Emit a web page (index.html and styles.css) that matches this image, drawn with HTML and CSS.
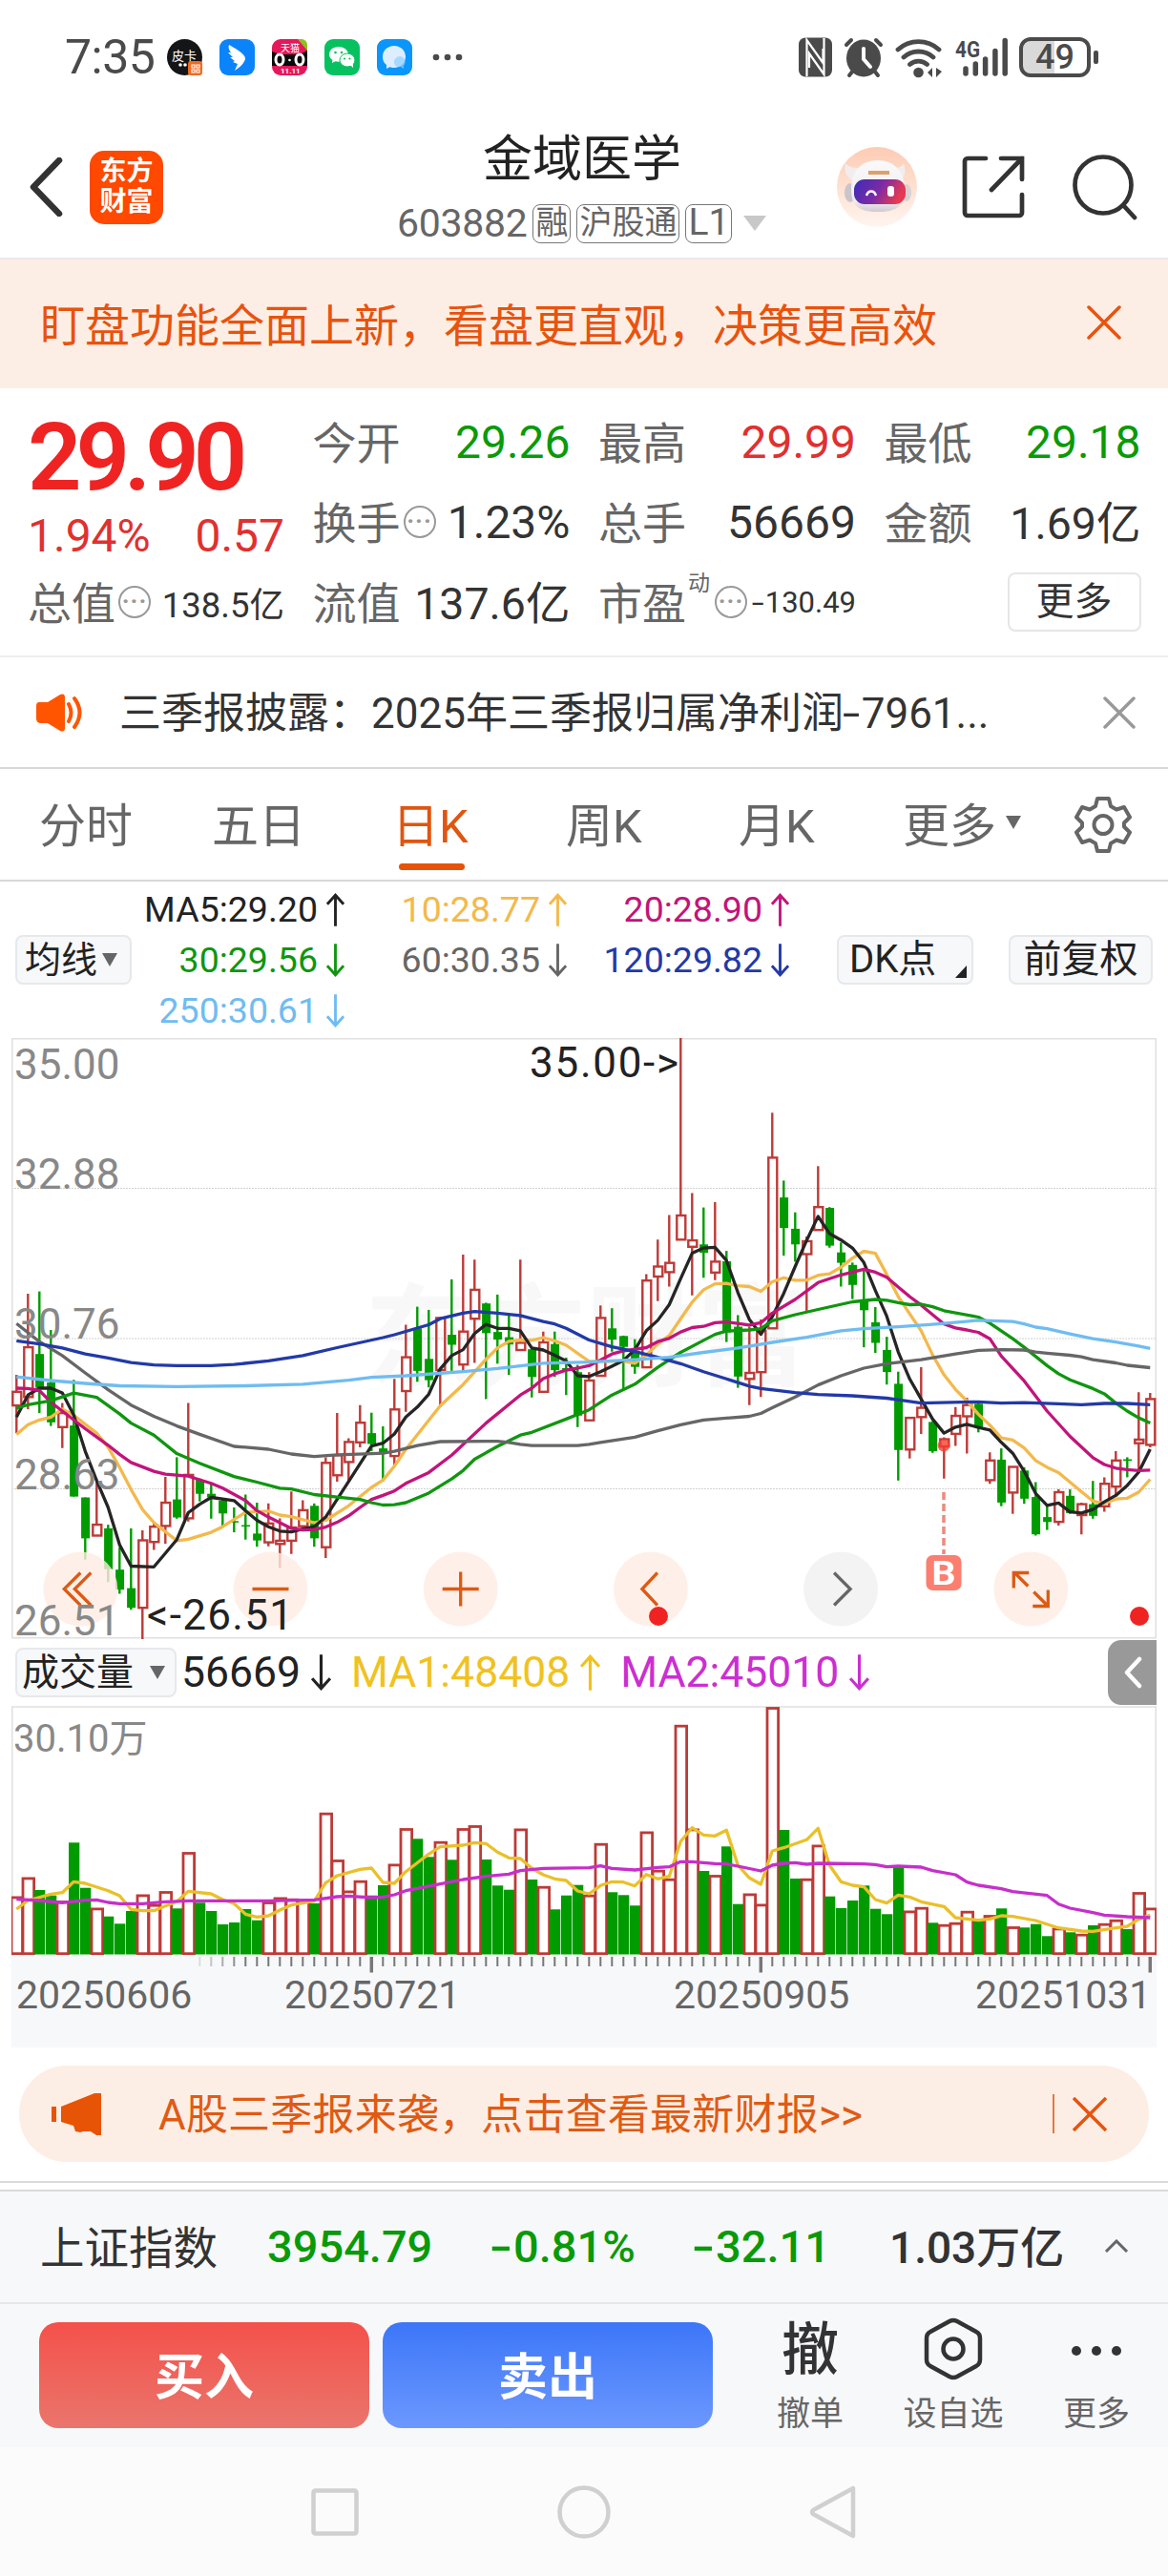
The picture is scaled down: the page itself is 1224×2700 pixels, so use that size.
FILE: index.html
```html
<!DOCTYPE html>
<html lang="zh-CN">
<head>
  <meta charset="UTF-8" />
  <meta name="viewport" content="width=device-width, initial-scale=1.0" />
  <title>金域医学 603882</title>
  <link rel="stylesheet" href="styles.css">
</head>
<body>
  <div class="phone">
    <!-- System status bar -->
    <div class="status-bar">
      <span class="clock">7:35</span>
      <div class="app-icons">
        <svg width="37" height="38" viewBox="0 0 37 38">
          <ellipse cx="18.5" cy="19" rx="18.5" ry="19" fill="#141516"/>
          <text x="5" y="22" font-size="13" fill="#fff">皮卡</text>
          <circle cx="14" cy="27" r="1.8" fill="#fff"/><circle cx="19" cy="27" r="1.8" fill="#fff"/>
          <rect x="22" y="23" width="15" height="15" rx="3" fill="#f26a21"/>
          <path d="M26 27h3v3h-3zM31 27h3v3h-3zM26 32h3v3h-3zM31 32h3v3h-3z" fill="none" stroke="#fff" stroke-width="1.2"/>
        </svg>
        <svg width="37" height="38" viewBox="0 0 37 38">
          <rect width="37" height="38" rx="9" fill="#0b84fb"/>
          <path d="M10 6c7 4 16 9 17 14 0 4-5 9-11 13l3-7-5-2 2-1-5-4 3 0-5-5 3 0c-2-3-3-5-2-8z" fill="#fff"/>
        </svg>
        <svg width="37" height="38" viewBox="0 0 37 38">
          <rect width="37" height="38" rx="9" fill="#e6175a"/>
          <path d="M27 0h4a6 6 0 0 1 6 6v6z" fill="#8cc21b"/>
          <path d="M0 13l8 3h21l8-4v16H0z" fill="#0a0a0a"/>
          <text x="9" y="13" font-size="10" fill="#fff">天猫</text>
          <ellipse cx="8" cy="21.500" rx="4" ry="5.500" fill="none" stroke="#fff" stroke-width="3"/>
          <ellipse cx="29" cy="21.500" rx="4" ry="5.500" fill="none" stroke="#fff" stroke-width="3"/>
          <circle cx="18.500" cy="22" r="1.300" fill="#fff"/>
          <text x="9" y="36" font-size="8" font-weight="700" fill="#fff">11.11</text>
        </svg>
        <svg width="37" height="38" viewBox="0 0 37 38">
          <rect width="37" height="38" rx="9" fill="#07c160"/>
          <path d="M15 8c-6 0-10 3.600-10 8 0 2.500 1.300 4.500 3.500 6l-.6 3 3.600-1.700c1 .3 2.300.4 3.500.4C21 23.700 25 20 25 16s-4-8-10-8z" fill="#fff"/>
          <ellipse cx="24" cy="22" rx="8" ry="7" fill="#fff" stroke="#07c160" stroke-width="1"/>
          <path d="M27 27l3 3 0-4z" fill="#fff"/>
          <g fill="#07c160"><circle cx="11.500" cy="14" r="1.300"/><circle cx="18" cy="14" r="1.300"/><circle cx="21" cy="20.500" r="1.100"/><circle cx="26.500" cy="20.500" r="1.100"/></g>
        </svg>
        <svg width="37" height="38" viewBox="0 0 37 38">
          <rect width="37" height="38" rx="9" fill="#0a96fb"/>
          <path d="M18 7c7 0 12 5 12 11.500S25 30 18 30c-2 0-3-.3-4.500-.8L10 31v-4c-3-2-4-5-4-8.500C6 12 11 7 18 7z" fill="#dceeff"/>
          <path d="M24 18a6 6 0 0 1 4 10v3l-3-2c-5 1-7-2-7-5s3-6 6-6z" fill="#8fd0ff" opacity=".7"/>
        </svg>
        <svg class="ellipsis" width="32" height="8" viewBox="0 0 32 8"><circle cx="4" cy="4" r="3.300"/><circle cx="16" cy="4" r="3.300"/><circle cx="28" cy="4" r="3.300"/></svg>
      </div>
      <div class="system-icons">
        <svg width="35" height="42" viewBox="0 0 35 42">
          <rect width="35" height="41" y=".5" rx="7" fill="#4a4a4a"/>
          <path d="M8.500 41V3l17 24V12M26.500 1v38L11 17v15" fill="none" stroke="#fff" stroke-width="2.200"/>
        </svg>
        <svg class="alarm" width="42" height="44" viewBox="0 0 42 44">
          <g stroke="#4a4a4a" stroke-width="4" stroke-linecap="round"><path d="M3 9l5-5M39 9l-5-5M10 36l-4 5M32 36l4 5"/></g>
          <ellipse cx="21" cy="23" rx="18" ry="19.500" fill="#4a4a4a"/>
          <path d="M21 13v11l7 8" fill="none" stroke="#fff" stroke-width="4" stroke-linecap="round"/>
        </svg>
        <svg class="wifi" width="50" height="44" viewBox="0 0 50 44">
          <g fill="none" stroke="#4a4a4a" stroke-width="4.800" stroke-linecap="round">
            <path d="M3 14a32 32 0 0 1 43 0M9 22a23 23 0 0 1 31 0M15.500 29.500a13.500 13.500 0 0 1 18 0"/>
          </g>
          <circle cx="24.500" cy="38" r="5.300" fill="#4a4a4a"/>
          <path d="M39 33v10l-5-5zM43 33v10l6-6z" fill="#4a4a4a"/>
        </svg>
        <svg class="signal" width="58" height="44" viewBox="0 0 58 44">
          <text x="1" y="22" font-size="24" font-weight="700" textLength="26" lengthAdjust="spacingAndGlyphs" fill="#4a4a4a">4G</text>
          <g stroke="#4a4a4a" stroke-width="5.500" stroke-linecap="round"><path d="M12 34v5M22.300 29v10M32.600 24v15M42.900 15.500v23.500M53.200 4.500v34.500"/></g>
        </svg>
        <div class="battery"><span>49</span></div>
        <i class="battery-nub"></i>
      </div>
    </div>

    <!-- Title bar -->
    <header class="header">
      <svg class="back" width="36" height="62" viewBox="0 0 36 62"><path d="M32 3L5 31l27 28" fill="none" stroke="#333" stroke-width="6.500" stroke-linejoin="round" stroke-linecap="round"/></svg>
      <div class="logo">东方<br>财富</div>
      <div class="title">
        <h1>金域医学</h1>
        <div class="code">
          <span>603882</span>
          <b>融</b><b>沪股通</b><b>L1</b>
          <i class="tri"></i>
        </div>
      </div>
      <svg class="robot" width="84" height="84" viewBox="0 0 84 84">
        <defs>
          <linearGradient id="halo" x1="0" y1="0" x2="0" y2="1"><stop offset="0" stop-color="#fdcbb4"/><stop offset="1" stop-color="#fff5ef"/></linearGradient>
          <linearGradient id="visor" x1="0" y1="0" x2="1" y2=".3"><stop offset="0" stop-color="#3b2db6"/><stop offset=".55" stop-color="#7b2aa6"/><stop offset="1" stop-color="#e63a52"/></linearGradient>
          <linearGradient id="shell" x1="0" y1="0" x2="0" y2="1"><stop offset="0" stop-color="#fbf9fa"/><stop offset=".8" stop-color="#efecef"/><stop offset="1" stop-color="#cfcad2"/></linearGradient>
        </defs>
        <circle cx="42" cy="42" r="42" fill="url(#halo)"/>
        <path d="M9 17c-2 10 2 16 8 18l6-13c-6 0-11-1-14-5zM70 17c3 10 1 15-4 18l-6-13c5 0 8-1 10-5z" fill="#f1eded"/>
        <ellipse cx="14" cy="48" rx="6" ry="10" fill="#c9c5cc"/><ellipse cx="73" cy="48" rx="5" ry="9" fill="#d8d2d4"/>
        <path d="M43 14c17 0 28 12 28 30 0 17-7 24-28 24S15 61 15 44c0-18 10-30 28-30z" fill="url(#shell)"/>
        <rect x="18" y="34" width="54" height="26" rx="11" fill="url(#visor)"/>
        <path d="M33 27h22" stroke="#dca06a" stroke-width="4"/>
        <path d="M31 51c2-6 8-6 10 0" fill="none" stroke="#fff" stroke-width="2.500"/>
        <rect x="53" y="41" width="7" height="11" rx="3" fill="#fff"/>
      </svg>
      <svg class="share" width="66" height="66" viewBox="0 0 66 66"><path d="M25 3H6a3 3 0 0 0-3 3v54a3 3 0 0 0 3 3h54a3 3 0 0 0 3-3V41M41 3h22v22M63 3L31 36" fill="none" stroke="#333" stroke-width="4.700" stroke-linecap="round"/></svg>
      <svg class="search" width="70" height="70" viewBox="0 0 70 70"><g fill="none" stroke="#333" stroke-width="4.700" stroke-linecap="round"><circle cx="33" cy="33" r="29.500"/><path d="M54 54l12 13"/></g></svg>
    </header>

    <div class="banner">
      <span>盯盘功能全面上新，看盘更直观，决策更高效</span>
      <svg width="36" height="36" viewBox="0 0 36 36"><path d="M2 2l32 32M34 2L2 34" stroke="#e8530e" stroke-width="3.500" stroke-linecap="round"/></svg>
    </div>

    <!-- Quote summary -->
    <section class="quote">
      <div class="price-cell">
        <div class="price">29.90</div>
        <div class="change"><span>1.94%</span><span>0.57</span></div>
      </div>
      <div class="cell"><label>今开</label><span class="green">29.26</span></div>
      <div class="cell"><label>最高</label><span class="red">29.99</span></div>
      <div class="cell"><label>最低</label><span class="green">29.18</span></div>
      <div class="cell"><label>换手</label><i class="dots">···</i><span>1.23%</span></div>
      <div class="cell"><label>总手</label><span>56669</span></div>
      <div class="cell"><label>金额</label><span class="yi">1.69亿</span></div>
      <div class="cell"><label>总值</label><i class="dots">···</i><span class="mid">138.5亿</span></div>
      <div class="cell"><label>流值</label><span class="yi">137.6亿</span></div>
      <div class="cell"><label>市盈</label><sup>动</sup><i class="dots">···</i><span class="small"><em>-</em>130.49</span></div>
      <div class="cell"><button class="more">更多</button></div>
    </section>

    <div class="notice">
      <svg width="50" height="42" viewBox="0 0 50 42"><path d="M3 10h9L25 2q5-2 5 3v32q0 5-5 3l-13-8H5q-5 0-5-5V14q0-4 3-4z" fill="#ff5500"/><path d="M34 12q5 9 0 18M40 6q11 15 0 30" fill="none" stroke="#ff5500" stroke-width="4" stroke-linecap="round"/></svg>
      <span>三季报披露：2025年三季报归属净利润<em>-</em>7961...</span>
      <svg width="34" height="34" viewBox="0 0 34 34"><path d="M2 2l30 30M32 2L2 32" stroke="#999" stroke-width="3.500" stroke-linecap="round"/></svg>
    </div>

    <nav class="tabs">
      <a>分时</a><a>五日</a><a class="active">日K</a><a>周K</a><a>月K</a><a>更多<i class="tri dark"></i></a>
      <svg width="60" height="60" viewBox="0 0 60 60"><path d="M24 3h12l2 8 6 3.500 8-2.500 6 10.500-6 6v4l6 6-6 10.500-8-2.500-6 3.500-2 8H24l-2-8-6-3.500-8 2.500L2 38.500l6-6v-4l-6-6L8 12l8 2.500 6-3.500z" fill="none" stroke="#666" stroke-width="4" stroke-linejoin="round"/><circle cx="30" cy="30.500" r="9.500" fill="none" stroke="#666" stroke-width="4"/></svg>
    </nav>

    <!-- Moving average legend -->
    <section class="legend">
      <button class="tag avg">均线<i class="tri dark"></i></button>
      <div class="ma-grid">
        <span class="ma5">MA5:29.20<svg class="arw"><use href="#up"/></svg></span>
        <span class="ma10">10:28.77<svg class="arw"><use href="#up"/></svg></span>
        <span class="ma20">20:28.90<svg class="arw"><use href="#up"/></svg></span>
        <span class="ma30">30:29.56<svg class="arw"><use href="#down"/></svg></span>
        <span class="ma60">60:30.35<svg class="arw"><use href="#down"/></svg></span>
        <span class="ma120">120:29.82<svg class="arw"><use href="#down"/></svg></span>
        <span class="ma250">250:30.61<svg class="arw"><use href="#down"/></svg></span>
      </div>
      <button class="tag dk">DK点<i class="corner"></i></button>
      <button class="tag fq">前复权</button>
    </section>

    <svg class="chart" id="kline" width="1200" height="630" viewBox="0 0 1200 630"></svg>

    <section class="vol-head">
      <button class="tag vol">成交量<i class="tri dark"></i></button>
      <span class="v0">56669<svg class="arw"><use href="#down"/></svg></span>
      <span class="v1">MA1:48408<svg class="arw"><use href="#up"/></svg></span>
      <span class="v2">MA2:45010<svg class="arw"><use href="#down"/></svg></span>
      <div class="fold"><svg width="20" height="34" viewBox="0 0 20 34"><path d="M17 3L4 17l13 14" fill="none" stroke="#fff" stroke-width="4.500" stroke-linecap="round" stroke-linejoin="round"/></svg></div>
    </section>

    <svg class="chart" id="volume" width="1200" height="262" viewBox="0 0 1200 262"></svg>

    <div class="axis">
      <svg id="ticks" width="1200" height="20" viewBox="0 0 1200 20"></svg>
      <div class="dates"><span>20250606</span><span>20250721</span><span>20250905</span><span>20251031</span></div>
    </div>

    <div class="pill">
      <svg width="52" height="44" viewBox="0 0 52 44"><path d="M0 14h5v16H0zM10 14L45 0h7v44h-5l-6-4h-8l-3 1-5-1-2-6-13-4z" fill="#e85405"/></svg>
      <span>A股三季报来袭，点击查看最新财报&gt;&gt;</span>
      <i class="bar"></i>
      <svg width="36" height="36" viewBox="0 0 36 36"><path d="M1 1l34 34M35 1L1 35" stroke="#e8530e" stroke-width="3.500"/></svg>
    </div>

    <footer class="bottom">
      <div class="index-row">
        <span class="name">上证指数</span>
        <span class="green">3954.79</span>
        <span class="green"><em>-</em>0.81%</span>
        <span class="green"><em>-</em>32.11</span>
        <span class="amount">1.03万亿</span>
        <svg width="26" height="15" viewBox="0 0 26 15"><path d="M2 13L13 2l11 11" fill="none" stroke="#666" stroke-width="3"/></svg>
      </div>
      <div class="actions">
        <button class="buy">买入</button>
        <button class="sell">卖出</button>
        <div class="act"><b>撤</b><span>撤单</span></div>
        <div class="act"><svg width="62" height="66" viewBox="0 0 62 66"><path d="M27 4q4-2 8 0l20 11q4 2 4 7v22q0 5-4 7L35 62q-4 2-8 0L7 51q-4-2-4-7V22q0-5 4-7z" fill="none" stroke="#333" stroke-width="4.500"/><circle cx="31" cy="33" r="10.500" fill="none" stroke="#333" stroke-width="4.500"/></svg><span>设自选</span></div>
        <div class="act"><svg width="54" height="66" viewBox="0 0 54 66" fill="#333"><circle cx="6" cy="35" r="5"/><circle cx="27" cy="35" r="5"/><circle cx="48" cy="35" r="5"/></svg><span>更多</span></div>
      </div>
    </footer>

    <div class="nav-bar">
      <svg width="50" height="50" viewBox="0 0 50 50"><rect x="2.500" y="2.500" width="45" height="45" rx="2" fill="none" stroke="#d0d0d0" stroke-width="4.500"/></svg>
      <svg width="56" height="56" viewBox="0 0 56 56"><circle cx="28" cy="28" r="25.500" fill="none" stroke="#d0d0d0" stroke-width="4.500"/></svg>
      <svg width="50" height="56" viewBox="0 0 50 56"><path d="M46 3v50L4 30q-2-2 0-4z" fill="none" stroke="#d0d0d0" stroke-width="4.500" stroke-linejoin="round"/></svg>
    </div>
  </div>

  <svg class="defs">
    <symbol id="up" viewBox="0 0 22 36"><path d="M11 36V2M2 12l9-10 9 10" fill="none" stroke="currentColor" stroke-width="3"/></symbol>
    <symbol id="down" viewBox="0 0 22 36"><path d="M11 0v34M2 24l9 10 9-10" fill="none" stroke="currentColor" stroke-width="3"/></symbol>
  </svg>
  <script src="chart.js"></script>
</body>
</html>
```
FILE: chart.js
```js
(function() {
  // Candles: colour, high, open/close top, open/close bottom, low (chart levels, 21 = top edge)
  const candles = `r860,902,936,1005 r658,791,915,945 g652,808,892,955 g748,879,978,987 r930,955,990,1042
    g872,986,1163,1163 g1165,1165,1267,1320 r1120,1233,1260,1260 g1233,1242,1344,1376 g1290,1345,1395,1405
    g1242,1391,1440,1445 r1247,1272,1440,1518 r1230,1238,1276,1296 r1114,1178,1236,1280 g1065,1170,1215,1218
    r930,1109,1217,1225 g1118,1121,1156,1175 g1130,1156,1165,1218 g1170,1173,1205,1238 g1190,1224,1227,1252
    g1158,1234,1237,1270 g1178,1255,1272,1288 r1180,1230,1277,1287 r1217,1273,1281,1341 r1150,1240,1273,1306
    r1172,1197,1237,1242 g1180,1186,1267,1288 r1065,1079,1289,1316 r955,1060,1110,1126 r1018,1027,1077,1125
    r935,979,1028,1040 g954,1005,1032,1050 g988,1043,1056,1125 r870,946,1062,1085 r735,816,900,952
    g690,744,850,877 g698,820,873,891 r718,718,848,940 g622,760,785,850 r560,752,834,848
    r573,648,720,830 g680,682,756,920 g660,753,772,832 g710,766,784,860 r573,780,798,800
    g793,796,865,916 r752,779,902,902 g752,783,848,865 g817,843,850,910 g835,853,961,990
    r853,874,973,973 r687,718,862,862 g694,744,772,802 g762,763,790,897 g771,800,840,857
    r609,625,841,841 r523,590,615,676 r462,581,604,640 r21,463,523,523 r407,525,541,662
    g443,535,556,618 r430,578,605,624 g551,577,754,778 g711,740,864,892 r740,855,870,935
    r722,750,853,915 r207,319,744,744 g376,418,494,563 g455,496,535,578 r515,527,559,702
    r340,442,499,499 g442,444,538,543 g530,555,581,640 g580,586,636,671 g600,674,699,791
    g691,729,780,805 g765,798,853,884 g852,882,1047,1123 r967,967,1046,1068 r841,942,965,1007
    g975,977,1050,1054 r1015,1020,1038,1118 r940,962,1007,1037 r917,935,963,1056 g930,932,990,1003
    r1053,1073,1122,1131 g1043,1071,1178,1187 r1089,1089,1153,1206 g1090,1098,1168,1181 g1127,1164,1257,1260
    g1185,1214,1226,1246 r1145,1152,1226,1235 g1145,1161,1204,1206 r1178,1182,1209,1257 g1124,1182,1211,1218
    r1115,1131,1187,1201 r1050,1073,1138,1163 g1065,1070,1074,1115 r903,1021,1030,1100 r905,920,1034,1040`
    .split(/\s+/).map(s => [s[0], ...s.slice(1).split(',').map(Number)]);

  // Lines: index:level
  const averages = [
    ['#f3b94c', '0:1008 1:984 2:972 3:965 4:945 5:960 6:983 7:1005 8:1040 9:1090 10:1145 11:1195 12:1228 14:1273 15:1269 17:1252 18:1238 20:1202 22:1199 23:1209 24:1213 26:1228 27:1222 29:1186 31:1140 32:1122 33:1087 34:1045 37:937 39:884 41:821 42:793 43:776 44:773 45:774 46:767 47:775 48:786 50:826 51:826 53:826 54:831 55:810 56:783 57:762 58:720 59:679 60:648 61:633 62:632 63:638 64:640 65:652 66:628 67:618 68:624 69:624 70:612 71:608 72:592 73:569 74:552 75:557 76:610 77:665 78:708 79:750 80:810 81:860 82:896 83:925 84:958 85:985 86:1017 87:1022 88:1042 89:1073 90:1090 91:1103 92:1127 93:1151 94:1174 95:1180 96:1169 97:1167 98:1152 99:1120'],
    ['#252525', '0:965 1:910 2:893 3:893 4:905 5:960 6:1050 7:1123 8:1190 9:1283 10:1336 12:1338 14:1270 15:1203 16:1182 17:1165 19:1173 20:1198 21:1222 22:1238 23:1249 24:1251 25:1244 26:1238 27:1214 31:1037 32:1030 33:1007 34:965 35:940 36:908 37:845 38:812 39:797 40:757 41:734 42:744 43:744 44:750 45:793 46:798 47:811 48:825 49:862 50:864 51:852 52:838 53:824 54:797 55:750 56:724 57:685 58:620 59:557 60:544 61:542 62:575 63:655 64:722 65:759 66:715 67:657 68:590 69:525 70:465 71:508 72:524 73:544 74:580 75:650 76:714 77:803 78:870 79:920 80:970 81:1005 82:990 83:983 84:991 85:997 86:1028 87:1055 88:1100 89:1155 90:1185 91:1179 92:1201 93:1204 94:1195 95:1176 96:1160 97:1135 98:1102 99:1045'],
    ['#c2147a', '0:893 1:894 2:899 3:928 6:994 8:1035 9:1058 10:1078 12:1100 13:1107 15:1112 17:1130 18:1142 20:1173 21:1198 22:1214 24:1242 25:1246 26:1245 27:1239 28:1227 29:1211 30:1190 31:1170 32:1160 33:1149 34:1130 36:1103 38:1060 41:980 44:910 45:893 46:869 47:857 48:848 49:843 50:837 51:823 52:808 53:800 55:792 56:777 57:769 58:753 59:742 60:739 61:730 62:728 64:736 65:730 66:706 68:672 70:630 72:611 74:597 75:604 76:617 77:641 78:665 79:686 80:710 81:733 82:743 83:748 84:754 85:770 86:813 88:875 90:950 92:1013 94:1066 95:1083 96:1092 97:1096 98:1098 99:1097'],
    ['#0f960f', '0:943 1:934 3:924 5:905 7:916 9:957 10:980 12:1010 14:1056 16:1080 19:1113 21:1127 23:1142 24:1144 26:1158 28:1164 30:1170 31:1178 32:1184 33:1183 34:1178 36:1154 38:1119 39:1098 40:1070 42:1038 44:1010 45:1003 48:970 50:947 52:910 54:883 56:841 58:804 60:774 61:759 62:751 64:748 65:745 66:725 68:710 70:697 73:678 75:672 76:674 77:680 78:685 79:684 80:690 81:700 84:716 85:731 87:770 88:791 90:837 91:857 92:872 94:894 95:907 96:930 97:950 98:967 99:980'],
    ['#666666', '0:732 2:777 4:812 6:855 8:897 10:935 12:963 14:987 16:1008 19:1038 20:1040 22:1045 24:1057 26:1063 28:1059 31:1056 32:1055 33:1050 35:1036 37:1026 42:1025 43:1028 44:1033 45:1036 49:1036 50:1033 51:1028 54:1015 56:999 58:984 60:972 64:963 65:956 66:942 68:915 70:885 72:862 74:843 76:832 79:822 82:808 84:799 86:797 88:798 89:803 90:806 92:811 93:815 94:822 96:830 97:836 99:842'],
    ['#2239a8', '0:775 2:783 4:793 6:808 8:818 10:829 12:835 14:837 17:837 19:834 22:825 25:812 28:792 32:767 33:760 36:735 37:720 39:706 40:702 42:706 44:712 46:727 47:733 48:744 50:773 52:790 54:802 56:816 58:832 60:852 62:870 64:888 65:894 68:904 70:909 73:912 76:918 78:926 79:930 84:927 86:930 88:929 91:932 93:934 95:931 97:931 99:934'],
    ['#6fbcf2', '0:865 3:874 6:881 9:887 14:889 20:887 25:883 29:873 31:866 34:862 39:852 42:844 46:831 50:828 54:822 57:816 60:804 63:793 66:779 69:766 72:750 74:745 77:740 80:734 84:724 87:727 88:733 89:741 90:745 92:758 94:770 96:778 98:788 99:794']
  ];

  // Volume bar tops, three levels per pixel, 237 = top edge
  const volumes = [833,773,813,830,847,664,806,869,896,919,879,827,858,817,871,694,853,879,921,915,
    873,908,850,836,840,843,855,570,718,815,783,830,798,731,619,652,709,660,718,619,
    610,717,799,812,620,780,801,874,830,797,828,666,820,829,862,629,750,777,294,620,
    753,766,676,857,824,857,238,624,777,777,671,833,870,846,799,872,889,744,878,867,
    916,921,915,879,905,892,871,928,931,920,958,932,946,951,924,918,906,936,820,869];

  const volumeLines = [
    ['#eac02a', '0:873 1:846 3:826 4:821 5:787 6:792 8:815 9:831 10:874 11:878 12:878 13:863 14:850 15:817 17:825 18:843 19:856 20:889 21:898 22:894 23:876 24:860 26:848 27:790 28:768 30:748 31:744 32:789 33:792 34:755 36:700 37:677 39:672 40:664 41:667 42:694 43:712 44:714 45:745 46:765 47:778 48:783 49:816 50:825 51:799 52:787 53:788 54:800 55:764 56:778 57:770 58:660 59:617 60:640 61:643 62:625 63:735 64:775 65:795 66:690 67:680 69:655 70:619 71:735 72:787 73:798 74:803 75:843 76:854 77:829 78:835 79:850 81:865 82:900 84:908 85:904 86:894 87:896 89:909 91:932 93:942 94:943 96:932 97:927 98:905 99:892'],
    ['#c62fcb', '0:842 2:846 4:853 6:845 7:844 8:852 9:856 11:856 13:850 15:847 22:847 26:844 28:834 29:832 31:837 32:835 33:828 34:815 35:808 37:794 39:780 41:770 43:763 44:752 46:745 50:743 51:737 52:745 54:750 56:742 57:740 58:724 59:724 61:730 62:731 63:738 65:753 66:735 67:729 68:727 69:732 70:729 73:730 74:731 75:733 76:740 77:738 79:741 80:752 82:765 83:788 84:798 86:809 87:818 90:830 91:857 92:870 94:884 95:892 97:897 99:900']
  ];

  const RED = '#bd3a37';
  const GREEN = '#009b00';
  const x = i => 5.3 + 12 * i;
  const y = v => (v - 21) / 2.376;
  const vy = v => (v - 237) / 3 + 1;
  const f = n => n.toFixed(1);

  function line(points, color, scale) {
    const pts = points.split(' ').map(p => {
      const [i, v] = p.split(':').map(Number);
      return f(x(i)) + ',' + f(scale(v));
    }).join(' ');
    return `<polyline points="${pts}" fill="none" stroke="${color}" stroke-width="3.300" stroke-linejoin="round"/>`;
  }

  function drawKline() {
    let out = '<text x="370" y="355" class="watermark">东方财富</text>';
    [157.5, 315, 472.5].forEach(g => {
      out += `<path d="M0 ${g}H1200" stroke="#d2d2d2" stroke-dasharray="2 1"/>`;
    });
    out += '<rect x=".75" y=".75" width="1198.500" height="628" fill="none" stroke="#e0e0e0" stroke-width="1.500"/>';
    candles.forEach(([c, high, top, bottom, low], i) => {
      const color = c === 'r' ? RED : GREEN;
      const cx = f(x(i));
      if (c === 'r') {
        out += `<path d="M${cx} ${f(y(high))}V${f(y(top))}M${cx} ${f(y(bottom))}V${f(y(low))}" stroke="${color}" stroke-width="2.400"/>`;
        out += `<rect x="${f(x(i) - 4)}" y="${f(y(top))}" width="9" height="${f(y(bottom) - y(top))}" fill="none" stroke="${color}" stroke-width="2.400"/>`;
      } else {
        out += `<path d="M${cx} ${f(y(high))}V${f(y(low))}" stroke="${color}" stroke-width="2.400"/>`;
        out += `<rect x="${f(x(i) - 4.200)}" y="${f(y(top))}" width="9" height="${f(Math.max(1.500, y(bottom) - y(top)))}" fill="${color}"/>`;
      }
    });
    averages.forEach(a => { out += line(a[1], a[0], y); });

    // Buy marker
    out += '<circle cx="977" cy="427" r="6.500" fill="#f5402e" opacity=".8"/>';
    out += '<path d="M977 476V541" stroke="#ec8a7e" stroke-width="3.500" stroke-dasharray="8 4"/>';
    out += '<rect x="958.500" y="542" width="37" height="37" rx="7" fill="#fb7e70"/>';
    out += '<text x="977" y="573" class="buy-mark" textLength="25" lengthAdjust="spacingAndGlyphs">B</text>';

    // Round chart buttons
    const icons = [
      'M11-17L-6 0L11 17M0-17L-17 0L0 17', 'M-19 0H19', 'M-19 0H19M0-18V18',
      'M7-17L-9 0L7 17', 'M-7-17L10 0L-7 17', 'M-18-1V-17H-2M-17-17L-3-3M18 1V18H2M17 17L3 3'
    ];
    icons.forEach((d, i) => {
      const gray = i === 4;
      out += `<g transform="translate(${72.300 + 199.200 * i} 577.500)">
        <circle r="39" fill="${gray ? '#f0f0f0' : '#feece2'}" opacity=".8"/>
        <path d="${d}" fill="none" stroke="${gray ? '#666' : '#dc5a14'}" stroke-width="3.300"/></g>`;
    });

    // Price scale
    [['35.00', 43], ['32.88', 158], ['30.76', 315], ['28.63', 473], ['26.51', 626]].forEach(l => {
      out += `<text x="3" y="${l[1]}" class="scale">${l[0]}</text>`;
    });
    out += '<text x="543" y="41" class="mark" textLength="156">35.00-&gt;</text>';
    out += '<text x="142" y="620" class="mark" textLength="153">&lt;-26.51</text>';

    out += '<circle cx="678" cy="606" r="10" fill="#f02323"/><circle cx="1182" cy="606" r="10" fill="#f02323"/>';
    document.getElementById('kline').innerHTML = out;
  }

  function drawVolume() {
    let out = '<path d="M.75 262V1H1199.250V262" fill="none" stroke="#e0e0e0" stroke-width="1.500"/>';
    volumes.forEach((v, i) => {
      const h = 260.500 - vy(v);
      if (candles[i][0] === 'r') {
        out += `<rect x="${f(x(i) - 5.300)}" y="${f(vy(v) + 1.200)}" width="11.600" height="${f(h - 2)}" fill="#fff" stroke="${RED}" stroke-width="2.800"/>`;
      } else {
        out += `<rect x="${f(x(i) - 5.300)}" y="${f(vy(v))}" width="11.300" height="${f(h)}" fill="${GREEN}"/>`;
      }
    });
    volumeLines.forEach(l => { out += line(l[1], l[0], vy); });
    out += '<text x="2" y="48" class="vol-scale">30.10万</text>';
    document.getElementById('volume').innerHTML = out;
  }

  function drawTicks() {
    let out = '';
    for (let i = 16; i < 100; i++) {
      const major = i === 31 || i === 65 || i === 99;
      const alpha = Math.min(1, (i - 15) / 5);
      out += `<path d="M${f(x(i))} 1V${major ? 17.500 : 11}" stroke="#777" stroke-width="${major ? 3.500 : 2}" opacity="${alpha}"/>`;
    }
    document.getElementById('ticks').innerHTML = out;
  }

  drawKline();
  drawVolume();
  drawTicks();
})();
```
FILE: styles.css
```css
* {
  margin: 0;
  padding: 0;
  box-sizing: border-box;
}
body {
  font-family: Roboto, "Noto Sans CJK SC", sans-serif;
  background: #fff;
  color: #333;
}
button {
  font: inherit;
  color: inherit;
  border: none;
}
svg {
  display: block;
  flex: none;
}
i {
  font-style: normal;
}
/* Wide minus sign in front of numbers */
em {
  display: inline-block;
  font-style: normal;
  margin: 0 .1em 0 .05em;
  transform: scaleX(1.5);
}
.defs {
  display: none;
}
.phone {
  width: 1224px;
  height: 2700px;
  overflow: hidden;
  display: flex;
  flex-direction: column;
}
.phone > * {
  flex: none;
}
.green {
  color: #099a09;
}
.red {
  color: #e03030;
}
.tri {
  border: 12px solid transparent;
  border-top: 16px solid #c8c8c8;
  border-bottom: none;
}
.tri.dark {
  border-width: 14px 8px 0;
  border-top-color: #666;
}

/* Status bar */
.status-bar {
  height: 120px;
  padding: 0 73px 0 68px;
  display: flex;
  align-items: center;
  color: #4a4a4a;
}
.clock {
  font-size: 50px;
  width: 107px;
  letter-spacing: -.5px;
}
.app-icons {
  display: flex;
  align-items: center;
  gap: 18px;
}
.ellipsis {
  margin-left: 3px;
  fill: #4a4a4a;
}
.system-icons {
  display: flex;
  align-items: center;
  margin-left: auto;
}
.alarm {
  margin-left: 12px;
}
.wifi {
  margin-left: 12px;
}
.signal {
  margin: 0 10px 0 12px;
}
.battery {
  width: 75px;
  height: 42px;
  border: 4px solid #4a4a4a;
  border-radius: 12px;
  background: linear-gradient(90deg, #d9d9d9 50%, #fff 50%);
  font-size: 36px;
  font-weight: 500;
  line-height: 35px;
  text-align: center;
}
.battery-nub {
  width: 5px;
  height: 14px;
  margin-left: 3px;
  border-radius: 2px;
  background: #4a4a4a;
}

/* Header */
.header {
  height: 152px;
  padding-left: 30px;
  display: flex;
  align-items: flex-start;
  border-bottom: 2px solid #e9e9e9;
}
.back {
  margin-top: 45px;
}
.logo {
  width: 77px;
  height: 77px;
  margin: 38px 0 0 28px;
  padding-top: 6px;
  border-radius: 15px;
  background: #ff4800;
  color: #fff;
  font-size: 28px;
  font-weight: 700;
  line-height: 32px;
  text-align: center;
}
.title {
  width: 482px;
  margin-left: 216px;
  padding: 21px 0 0 29px;
}
.title h1 {
  width: 388px;
  font-size: 52px;
  font-weight: 400;
  line-height: 54px;
  color: #222;
  text-align: center;
}
.code {
  display: flex;
  align-items: center;
  height: 40px;
  margin-top: 19px;
  gap: 6px;
  font-size: 41px;
  color: #666;
}
.code span {
  letter-spacing: -.3px;
}
.code b {
  height: 41px;
  padding: 0 2px;
  border: 1.500px solid #777;
  border-radius: 8px;
  font-size: 34px;
  font-weight: 400;
  line-height: 36px;
}
.code b:nth-of-type(3) {
  font-size: 39px;
}
.code .tri {
  margin-left: 6px;
}
.robot {
  margin: 34px 0 0 8px;
}
.share {
  margin: 43px 0 0 47px;
}
.search {
  margin: 41px 0 0 49px;
}

.banner {
  height: 135px;
  padding: 0 49px 4px 42px;
  display: flex;
  align-items: center;
  justify-content: space-between;
  background: #fdeee5;
  color: #e8530e;
  font-size: 47px;
}

/* Quote */
.quote {
  height: 280px;
  padding: 14px 28px 0 29px;
  display: grid;
  grid-template-columns: 269px 270px 270px 269px;
  grid-template-rows: repeat(3, 84px);
  column-gap: 29.500px;
}
.price-cell {
  grid-row: span 2;
  color: #f02323;
}
.price {
  height: 112px;
  font-size: 99px;
  font-weight: 600;
  line-height: 116px;
  letter-spacing: -6px;
}
.change {
  display: flex;
  justify-content: space-between;
  color: #e03030;
  font-size: 48px;
  line-height: 58px;
}
.cell {
  display: flex;
  align-items: center;
  font-size: 48px;
}
.cell label {
  font-size: 46px;
  color: #666;
  padding-bottom: 5px;
}
.cell span {
  margin-left: auto;
}
.cell .yi {
  padding-bottom: 5px;
  font-size: 46.500px;
}
.cell .mid {
  font-size: 36.500px;
}
.cell .small {
  font-size: 31px;
}
.cell sup {
  font-size: 23px;
  color: #666;
  align-self: flex-start;
  margin: 3px 2px 0;
}
.dots {
  width: 34px;
  height: 34px;
  margin-left: 3px;
  border: 2.500px solid #999;
  border-radius: 50%;
  font-size: 26px;
  font-weight: 700;
  line-height: 29px;
  text-align: center;
  letter-spacing: 1px;
  color: #999;
}
.more {
  width: 140px;
  height: 62px;
  margin-left: auto;
  border: 2px solid #e6e6e6;
  border-radius: 8px;
  background: #fff;
  font-size: 40px;
  line-height: 54px;
}

.notice {
  height: 119px;
  padding: 0 34px 0 38px;
  display: flex;
  align-items: center;
  border-top: 2px solid #ededed;
  border-bottom: 2px solid #d8d8d8;
  font-size: 44px;
}
.notice span {
  flex: 1;
  margin-left: 37px;
  padding-bottom: 6px;
}

/* Period tabs */
.tabs {
  height: 118px;
  padding-left: 41px;
  display: grid;
  grid-template-columns: 181px 189px 182px 181px 172px 180px 60px;
  align-items: center;
  border-bottom: 2px solid #d8d8d8;
  color: #666;
  font-size: 49px;
}
.tabs a {
  display: flex;
  align-items: center;
  height: 116px;
  padding-bottom: 5px;
}
.tabs .tri {
  margin-left: 10px;
}
.tabs .active {
  position: relative;
  color: #e05510;
}
.tabs .active::after {
  content: "";
  position: absolute;
  left: 7px;
  bottom: 10px;
  width: 69px;
  height: 7px;
  border-radius: 4px;
  background: #e5540a;
}

/* Moving averages */
.legend {
  height: 164px;
  padding: 0 16px;
  display: flex;
  align-items: center;
}
.tag {
  display: flex;
  align-items: center;
  height: 52px;
  padding: 0 10px;
  border: 2px solid #e6e8ec;
  border-radius: 8px;
  background: #f7f8fa;
  font-size: 39px;
  line-height: 46px;
  color: #222;
}
.avg {
  width: 122px;
  padding: 0 8px;
  font-size: 38px;
  gap: 5px;
}
.ma-grid {
  width: 690px;
  display: grid;
  grid-template-columns: 224px 233px 233px;
  grid-auto-rows: 53px;
  align-items: center;
  font-size: 37.500px;
}
.ma-grid span {
  display: flex;
  align-items: center;
  justify-content: flex-end;
}
.arw {
  width: 21px;
  height: 35px;
  margin-left: 8px;
}
.ma5 { color: #222; }
.ma10 { color: #f3b94c; }
.ma20 { color: #c2147a; }
.ma30 { color: #0f960f; }
.ma60 { color: #666; }
.ma120 { color: #2239a8; }
.ma250 { color: #6fbcf2; }
.dk {
  width: 143px;
  margin-left: 49px;
  padding: 0 5px 0 11px;
  justify-content: space-between;
  font-size: 40px;
}
.corner {
  align-self: flex-end;
  margin-bottom: 5px;
  border-left: 12px solid transparent;
  border-bottom: 13px solid #222;
}
.fq {
  width: 151px;
  margin-left: auto;
  justify-content: center;
  font-size: 40px;
}

/* Charts */
.chart {
  margin-left: 12px;
}
.chart text {
  font-size: 44px;
}
.chart .watermark {
  font-size: 116px;
  font-weight: 700;
  fill: #f8f8f8;
}
.chart .scale {
  fill: #888;
}
.chart .mark {
  fill: #222;
}
.chart .buy-mark {
  font-size: 35px;
  font-weight: 700;
  fill: #fff;
  text-anchor: middle;
}
.chart .vol-scale {
  font-size: 40px;
  fill: #888;
}
.vol-head {
  height: 70px;
  padding: 0 12px 0 16px;
  display: flex;
  align-items: center;
  font-size: 44.500px;
}
.vol-head > span {
  display: flex;
  align-items: center;
}
.vol-head .arw {
  width: 23px;
  height: 38px;
  margin-left: 10px;
}
.vol {
  width: 169px;
  padding: 0 10px 0 5px;
  justify-content: space-between;
}
.v0 {
  margin-left: 5px;
  color: #222;
}
.v1 {
  margin-left: 20px;
  color: #f0c21e;
}
.v2 {
  margin-left: 20px;
  color: #cb2ed2;
}
.fold {
  width: 51px;
  height: 68px;
  margin-left: auto;
  display: flex;
  align-items: center;
  justify-content: center;
  border-radius: 14px 0 0 14px;
  background: #999;
}
.axis {
  width: 1200px;
  height: 96px;
  margin-left: 12px;
  background: #f7f8fa;
}
.dates {
  display: grid;
  grid-template-columns: 281px 408px 316px 190px;
  padding-left: 5px;
  color: #666;
  font-size: 41px;
  line-height: 42px;
}

.pill {
  height: 101px;
  margin: 19px 20px 20px;
  padding: 0 44px 0 34px;
  display: flex;
  align-items: center;
  border-radius: 50px;
  background: #fdeee5;
  color: #e05a14;
  font-size: 44px;
}
.pill span {
  margin: 0 auto 0 60px;
  padding-bottom: 5px;
  letter-spacing: .2px;
}
.pill .bar {
  width: 2px;
  height: 41px;
  margin-right: 19px;
  background: #e07a40;
}

/* Bottom area */
.bottom {
  height: 279px;
  border-top: 2px solid #dadada;
  background: #f7f8fa;
}
.index-row {
  height: 127px;
  padding: 0 41px 0 42px;
  display: grid;
  grid-template-columns: 238px 235px 212px 205px 225px 26px;
  align-items: center;
  border-bottom: 2px solid #e6e7ea;
  border-top: 7px solid #fff;
  box-shadow: inset 0 2px #dadada;
  font-size: 47px;
  font-weight: 500;
}
.index-row .name {
  font-size: 46.500px;
  font-weight: 400;
  padding-bottom: 4px;
}
.index-row .amount {
  font-size: 46px;
  padding-bottom: 4px;
}
.actions {
  display: flex;
  padding: 19px 0 0 41px;
}
.buy,
.sell {
  width: 346px;
  height: 111px;
  margin-right: 14px;
  padding-bottom: 4px;
  border-radius: 20px;
  color: #fff;
  font-size: 52px;
  font-weight: 700;
}
.buy {
  background: linear-gradient(#f4514a, #ea756c);
}
.sell {
  background: linear-gradient(#3c76f8, #6c98fe);
  margin-right: 27px;
}
.act {
  width: 150px;
  margin-top: -5px;
  display: flex;
  flex-direction: column;
  align-items: center;
}
.act b {
  height: 66px;
  font-size: 60px;
  font-weight: 500;
  line-height: 70px;
}
.act span {
  margin-top: 14px;
  font-size: 35px;
  line-height: 44px;
  color: #666;
}
.nav-bar {
  flex: 1;
  display: flex;
  align-items: center;
  background: #fbfbfb;
  padding-left: 326px;
}
.nav-bar svg:nth-child(2) {
  margin: 0 208px 0 208px;
}
```
